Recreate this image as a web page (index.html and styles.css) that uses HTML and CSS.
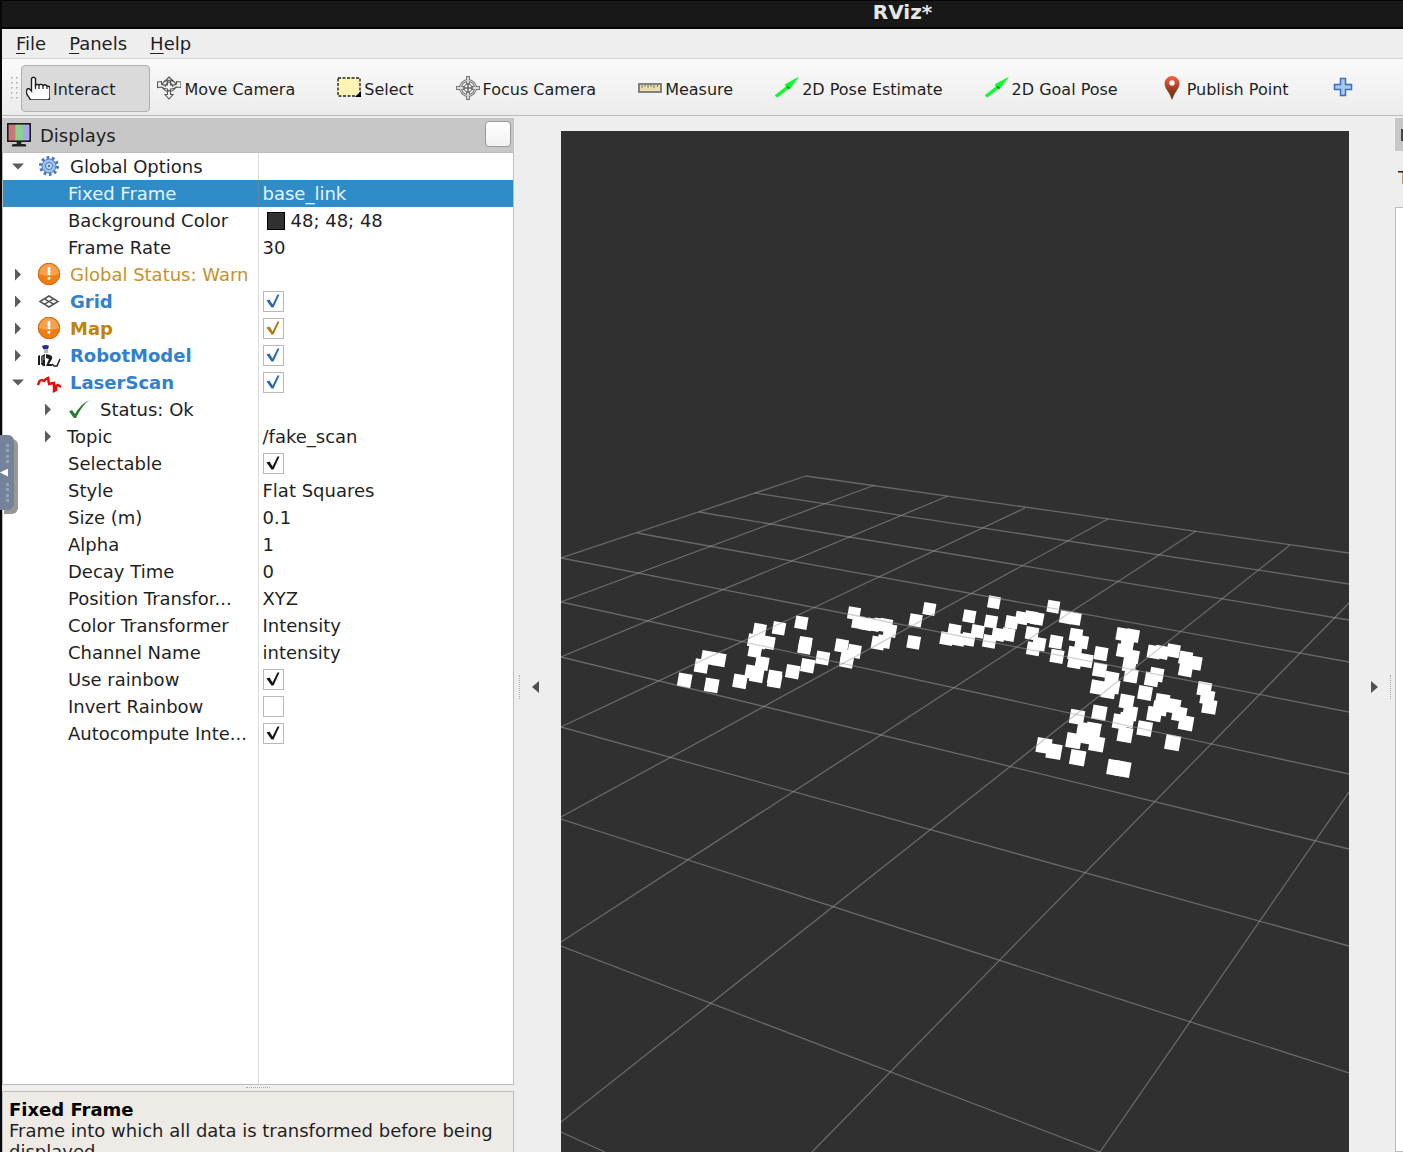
FILE: index.html
```html
<!DOCTYPE html>
<html lang="en">
<head>
<meta charset="utf-8">
<title>RViz*</title>
<link rel="stylesheet" href="styles.css">
</head>
<body>
<div class="window">
  <header class="titlebar">RViz*</header>
  <nav class="menubar">
    <button type="button"><u>F</u>ile</button>
    <button type="button"><u>P</u>anels</button>
    <button type="button"><u>H</u>elp</button>
  </nav>
  <div class="toolbar">
    <span class="grip"></span>
    <button type="button" class="tool active">
      <svg class="icon" viewBox="0 0 24 24"><path d="M5.500 13V2.500Q7.500 0 9.500 2.500V9.500L10.500 8.500Q12 8 13 9L14 8.500Q16 8 17 9.500L18.500 8.800Q20 8.500 21 10L23 10.500Q24 11 24 13V22L22.500 24H4.500L3.500 22L1 18.500Q0 16.500 0.800 14Q1.500 12 3.500 13L5.500 15Z" fill="#fff" stroke="#1c1c1c" stroke-width="1.400"/><path d="M9.500 9V13M13 9V13M17 9.500V13M21 10V13" stroke="#1c1c1c" stroke-width="1.200"/></svg>
      <span>Interact</span></button>
    <button type="button" class="tool">
      <svg class="icon" viewBox="0 0 24 24" fill="#f4f4f4" stroke="#555" stroke-width="1.100"><path d="M12 1L16 5H13.500V9Q18 9.500 19.500 8V5.500L24 6V11.500L20 11Q17 13 13.500 13V18.500H16L12 23L8 18.500H10.500V13Q7 13 4 11L0.500 11.500V6L4.500 5.500V8Q6 9.500 10.500 9V5H8Z"/><path d="M5 8.500Q9 2.500 12 4.500Q16 3 19 8.500M5 11Q9 17 12 14.500Q15 17 19 11M8 11Q10 6 12 6Q15 7 16 11" fill="none"/></svg>
      <span>Move Camera</span></button>
    <button type="button" class="tool">
      <svg class="icon" viewBox="0 0 24 24"><rect x="1" y="2" width="22" height="18" fill="#fdf4b4" stroke="#222" stroke-width="1.400" stroke-dasharray="3 1.500"/><path d="M24 15V21H18Z" fill="#000"/></svg>
      <span>Select</span></button>
    <button type="button" class="tool">
      <svg class="icon" viewBox="0 0 24 24" fill="none"><circle cx="12" cy="12" r="7.500" stroke="#777" stroke-width="2.800"/><path d="M12 0V24M0 12H24" stroke="#777" stroke-width="4"/><circle cx="12" cy="12" r="7.500" stroke="#ddd" stroke-width="1"/><path d="M12 1V8M12 16V23M1 12H8M16 12H23" stroke="#ddd" stroke-width="1.800"/><circle cx="12" cy="12" r="4" fill="#eee" stroke="#777"/><path d="M12 7V17M7 12H17" stroke="#666" stroke-width="1.400"/></svg>
      <span>Focus Camera</span></button>
    <button type="button" class="tool">
      <svg class="icon" viewBox="0 0 24 24"><rect x="1" y="8" width="22" height="8" fill="#e9dfa8" stroke="#777" stroke-width="1.800"/><path d="M4 9V12M7 9V11M10 9V12M13 9V11M16 9V12M19.500 9V11" stroke="#777"/></svg>
      <span>Measure</span></button>
    <button type="button" class="tool">
      <svg class="icon" viewBox="0 0 24 24"><path d="M1 20.500L13 11" stroke="#0bff2c" stroke-width="3.400"/><path d="M9.500 8.500L24 0.500L14.500 13.500Z" fill="#0bff2c"/><path d="M10.500 9.500L15 11L13.500 13.500Z" fill="#08901c"/></svg>
      <span>2D Pose Estimate</span></button>
    <button type="button" class="tool">
      <svg class="icon" viewBox="0 0 24 24"><path d="M1 20.500L13 11" stroke="#0bff2c" stroke-width="3.400"/><path d="M9.500 8.500L24 0.500L14.500 13.500Z" fill="#0bff2c"/><path d="M10.500 9.500L15 11L13.500 13.500Z" fill="#08901c"/></svg>
      <span>2D Goal Pose</span></button>
    <button type="button" class="tool">
      <svg class="icon" viewBox="0 0 24 24"><defs><linearGradient id="pin" x2="0" y2="1"><stop offset="0.100" stop-color="#ec5a3a"/><stop offset="0.600" stop-color="#94381d"/><stop offset="1" stop-color="#4d4a12"/></linearGradient></defs><path d="M12 24Q10 18 6 12.500Q3 7 6 3Q8.500 0 12 0T18 3Q21 7 18 12.500Q14 18 12 24Z" fill="url(#pin)"/><circle cx="12" cy="7" r="2.700" fill="#fff"/></svg>
      <span>Publish Point</span></button>
    <button type="button" class="tool" aria-label="Add tool">
      <svg class="icon" viewBox="0 0 24 24"><path d="M9.500 2.500H14.500V8.500H20.500V13.500H14.500V19.500H9.500V13.500H3.500V8.500H9.500Z" fill="#a9c8ec" stroke="#3f70b4" stroke-width="1.500"/></svg></button>
  </div>

  <main class="workspace">
    <aside class="dock">
      <div class="dock-head">
        <svg class="icon" viewBox="0 0 24 24"><rect x="1" y="1" width="22" height="17" fill="#a9a4ec"/><path d="M1 1H8.500V18H1Z" fill="#c87878"/><path d="M8.500 1H16V18H8.500Z" fill="#8ad38c"/><rect x="0.800" y="0.800" width="22.400" height="17.400" fill="none" stroke="#111" stroke-width="1.500"/><path d="M9 18H15L14 21H18Q20 22 19 23.500H5Q4 22 6 21H10Z" fill="#222"/></svg>
        <h2>Displays</h2>
        <button type="button" class="close" aria-label="Close"></button>
      </div>
      <div class="tree">
        <table>
          <colgroup><col class="name-col"><col></colgroup>
          <tbody>
          <tr><td><div class="node"><i class="arrow open"></i><svg class="icon" viewBox="0 0 24 24"><circle cx="12" cy="11" r="8.500" fill="none" stroke="#4377bd" stroke-width="3" stroke-dasharray="2.700 2.640"/><circle cx="12" cy="11" r="7" fill="#9dc0ea" stroke="#4377bd"/><circle cx="12" cy="11" r="3.500" fill="#c5daf3" stroke="#4377bd"/><circle cx="12" cy="11" r="1.200" fill="#4377bd"/></svg>Global Options</div></td><td></td></tr>
          <tr class="selected"><td><div class="leaf">Fixed Frame</div></td><td>base_link</td></tr>
          <tr><td><div class="leaf">Background Color</div></td><td><div class="color"><i class="swatch"></i>48; 48; 48</div></td></tr>
          <tr><td><div class="leaf">Frame Rate</div></td><td>30</td></tr>
          <tr class="status-warn"><td><div class="node"><i class="arrow"></i><svg class="icon" viewBox="0 0 24 24"><circle cx="12" cy="11" r="10.800" fill="#ef7d14" stroke="#cf6a12"/><path d="M2 11A10 10 0 0 1 22 11Q12 15 2 11Z" fill="#f8a04c"/><path d="M10.700 4H13.300V12H10.700ZM10.700 14H13.300V16.500H10.700Z" fill="#fff"/></svg>Global Status: Warn</div></td><td></td></tr>
          <tr class="display"><td><div class="node"><i class="arrow"></i><svg class="icon" viewBox="0 0 24 24" fill="none" stroke="#555" stroke-width="1.500"><path d="M3 11.500L12 6L21 11.500L12 17ZM7.500 8.800L16.500 14.200M16.500 8.800L7.500 14.200"/></svg><label for="grid">Grid</label></div></td><td><input type="checkbox" id="grid" checked></td></tr>
          <tr class="display warn"><td><div class="node"><i class="arrow"></i><svg class="icon" viewBox="0 0 24 24"><circle cx="12" cy="11" r="10.800" fill="#ef7d14" stroke="#cf6a12"/><path d="M2 11A10 10 0 0 1 22 11Q12 15 2 11Z" fill="#f8a04c"/><path d="M10.700 4H13.300V12H10.700ZM10.700 14H13.300V16.500H10.700Z" fill="#fff"/></svg><label for="map">Map</label></div></td><td><input type="checkbox" id="map" checked></td></tr>
          <tr class="display"><td><div class="node"><i class="arrow"></i><svg class="icon" viewBox="0 0 24 24"><path d="M5 2Q9 0 12 2L11 5H6Z" fill="#25308c"/><path d="M7 5H11V9H7Z" fill="#b8b8b8"/><path d="M1 12L3 11V21H1ZM4 12L8 10V22H6L4 20ZM9 10L13 11Q16 12 15 15L12 20H15V22H9L12 15L9 14Z" fill="#1d1d1d"/><path d="M5 12V19M7 12V16" stroke="#999"/><path d="M15 20L17 22H20L23 15" fill="none" stroke="#222" stroke-width="1.500"/></svg><label for="robot">RobotModel</label></div></td><td><input type="checkbox" id="robot" checked></td></tr>
          <tr class="display"><td><div class="node"><i class="arrow open"></i><svg class="icon" viewBox="0 0 24 24" fill="none" stroke="#f20505" stroke-width="2.400"><path d="M1 14L2.500 10L5 9L7 10L9 8L11 7L12 13L17 12V20L19 19V15L21 14L24 16"/></svg><label for="laser">LaserScan</label></div></td><td><input type="checkbox" id="laser" checked></td></tr>
          <tr><td><div class="node child"><i class="arrow"></i><svg class="icon" viewBox="0 0 24 24"><path d="M2 13.500L5 12L8 16Q13 7 22 2Q14 9 9 20H7Z" fill="#267f28"/></svg>Status: Ok</div></td><td></td></tr>
          <tr><td><div class="node child"><i class="arrow"></i>Topic</div></td><td>/fake_scan</td></tr>
          <tr><td><div class="leaf"><label for="selectable">Selectable</label></div></td><td><input type="checkbox" id="selectable" checked></td></tr>
          <tr><td><div class="leaf">Style</div></td><td>Flat Squares</td></tr>
          <tr><td><div class="leaf">Size (m)</div></td><td>0.1</td></tr>
          <tr><td><div class="leaf">Alpha</div></td><td>1</td></tr>
          <tr><td><div class="leaf">Decay Time</div></td><td>0</td></tr>
          <tr><td><div class="leaf">Position Transfor...</div></td><td>XYZ</td></tr>
          <tr><td><div class="leaf">Color Transformer</div></td><td>Intensity</td></tr>
          <tr><td><div class="leaf">Channel Name</div></td><td>intensity</td></tr>
          <tr><td><div class="leaf"><label for="rainbow">Use rainbow</label></div></td><td><input type="checkbox" id="rainbow" checked></td></tr>
          <tr><td><div class="leaf"><label for="invert">Invert Rainbow</label></div></td><td><input type="checkbox" id="invert"></td></tr>
          <tr><td><div class="leaf"><label for="auto">Autocompute Inte...</label></div></td><td><input type="checkbox" id="auto" checked></td></tr>
          <tr class="filler"><td></td><td></td></tr>
          </tbody>
        </table>
      </div>
      <div class="split-row"><span></span></div>
      <section class="help"><h3>Fixed Frame</h3><p>Frame into which all data is transformed before being displayed.</p></section>
    </aside>

    <div class="splitter"><span class="dots"></span><i class="collapse left"></i></div>

    <div class="view">
      <svg class="scene" viewBox="561 131 788 1021" preserveAspectRatio="xMidYMax slice" role="img" aria-label="Laser scan over grid">
        <g id="points" fill="#fff"></g>
        <g id="grid-lines" stroke="#a0a0a4" stroke-opacity="0.500" stroke-width="1.300">
          <path d="M806 476L1349 553M755 493L1349 584M699 512L1349 620M637 533L1349 662M561 558L1349 712M561 602L1349 774M561 657L1349 849M561 727L1349 946M561 819L1349 1073M561 946L1100 1152M561 1132L605 1152"/>
          <path d="M806 476L561 558M875 485L561 602M948 496L561 657M1025 508L561 727M1108 519L561 817M1196 531L561 942M1290 545L561 1122M1349 603L812 1152M1349 792L1100 1152"/>
        </g>
      </svg>
    </div>

    <div class="splitter right"><i class="collapse"></i><span class="dots"></span></div>

    <aside class="views">
      <div class="views-head"><i></i></div>
      <p>Type:</p>
      <div class="views-list"></div>
    </aside>
  </main>
  <button type="button" class="drawer" aria-label="Open side bar"><span></span><i></i><span></span></button>
</div>
<script src="scene.js"></script>
</body>
</html>
```
FILE: styles.css
```css
* { box-sizing: border-box; }
body {
  margin: 0;
  font: 18px/21px "DejaVu Sans", sans-serif;
  color: #1f1f1f;
  background: #eee;
}
button {
  font: inherit;
  color: inherit;
  background: none;
  border: 0;
  padding: 0;
}
h2, h3, p { margin: 0; font-size: inherit; }
h2 { font-weight: normal; }
.window {
  position: relative;
  height: 100vh;
  overflow: hidden;
  display: flex;
  flex-direction: column;
  padding-left: 2px;
  background: linear-gradient(to right, #080808 2px, #eee 2px);
}
.icon { width: 24px; height: 24px; flex: none; }

.titlebar {
  height: 29px;
  flex: none;
  padding-top: 1px;
  background: #181818;
  border-top: 1px solid #050505;
  border-bottom: 2px solid #050505;
  color: #e6e6e6;
  font-size: 20px;
  font-weight: bold;
  text-align: center;
  padding-left: 400px;
}
.menubar {
  height: 30px;
  flex: none;
  display: flex;
  align-items: center;
  gap: 23px;
  padding-left: 14px;
  border-bottom: 1px solid #d4d4d4;
}
.menubar u { text-underline-offset: 3px; text-decoration-thickness: 1px; }
.toolbar {
  height: 57px;
  flex: none;
  display: flex;
  align-items: center;
  gap: 2px;
  padding: 2px 0 0 7px;
  background: linear-gradient(#fafafa, #ececec);
  border-bottom: 1px solid #b9b9b9;
  font-size: 16px;
}
.grip {
  width: 10px;
  height: 26px;
  background: radial-gradient(circle, #bbb 1px, transparent 1px) 0 0 / 5px 5px;
}
.tool {
  height: 47px;
  flex: none;
  display: flex;
  align-items: center;
  gap: 3px;
  padding: 0 34px 0 4px;
  border: 1px solid transparent;
  border-radius: 4px;
  white-space: nowrap;
}
.tool span { padding-top: 2px; }
.tool.active {
  background: #dadada;
  border-color: #b0b0b0;
}

.workspace {
  flex: 1;
  min-height: 0;
  display: flex;
}
.dock {
  width: 512px;
  flex: none;
  display: flex;
  flex-direction: column;
  padding-top: 2px;
}
.dock-head {
  height: 34px;
  flex: none;
  display: flex;
  align-items: center;
  gap: 9px;
  padding: 0 3px 0 5px;
  background: #c7c7c7;
}
.close {
  width: 26px;
  height: 26px;
  margin-left: auto;
  margin-bottom: 2px;
  background: linear-gradient(#fff, #f1f1f1);
  border: 1px solid #999;
  border-radius: 4px;
}
.tree {
  flex: 1;
  min-height: 0;
  background: #fff;
  border: 1px solid #bdbdbd;
}
table {
  width: 100%;
  height: 100%;
  border-collapse: collapse;
  table-layout: fixed;
}
.name-col { width: 255px; }
tr { height: 27px; }
.filler { height: auto; }
td { padding: 0; vertical-align: middle; white-space: nowrap; }
td + td { padding-left: 4px; border-left: 1px solid #dcdcdc; }
.node {
  height: 27px;
  display: flex;
  align-items: center;
  gap: 9px;
  padding-left: 5px;
}
.child { padding-left: 35px; }
.leaf { padding-left: 65px; }
.arrow {
  width: 20px;
  height: 12px;
  flex: none;
  background: #5c5c5c;
  clip-path: polygon(7px 0, 13px 6px, 7px 12px);
}
.arrow.open { clip-path: polygon(4px 3px, 16px 3px, 10px 9px); }
.selected td { background: #308cc6; color: #e9f3fa; }
.selected td + td { border-color: #5c87a5; }
.status-warn { color: #c8902a; }
input[type="checkbox"] {
  appearance: none;
  display: block;
  width: 21px;
  height: 21px;
  margin: 0 0 1px;
  background: #fff;
  border: 1px solid #b8b8b8;
  color: #151515;
}
input:checked::before {
  content: "";
  display: block;
  width: 19px;
  height: 19px;
  background: currentColor;
  clip-path: polygon(3px 9px, 6px 8px, 9px 13px, 14px 3px, 16px 3px, 10px 16px, 8px 16px);
}
.display label { color: #3080d0; font-weight: bold; }
.display input[type="checkbox"] { color: #2b68b0; }
.warn label { color: #c08208; }
.warn input[type="checkbox"] { color: #b07a10; }
.color { display: flex; align-items: center; gap: 6px; padding-left: 4px; }
.swatch { width: 18px; height: 18px; background: #303030; border: 1px solid #000; }
.split-row {
  height: 6px;
  flex: none;
  display: flex;
  justify-content: center;
  align-items: flex-start;
  padding-top: 2px;
}
.split-row span { width: 24px; border-top: 1px dotted #aaa; }
.help {
  height: 61px;
  flex: none;
  padding: 7px 6px;
  background: #eeebe6;
  border: 1px solid #bdbdbd;
  border-bottom: 0;
}
.help h3 { color: #000; }

.splitter {
  width: 47px;
  flex: none;
  display: flex;
  align-items: center;
  padding: 106px 0 0 5px;
  gap: 12px;
}
.splitter.right { width: 46px; padding-left: 22px; gap: 12px; }
.dots { height: 24px; border-left: 1px dotted #aaa; }
.collapse {
  width: 7px;
  height: 12px;
  background: #505050;
  clip-path: polygon(0 0, 100% 50%, 0 100%);
}
.collapse.left { clip-path: polygon(100% 0, 0 50%, 100% 100%); }
.view {
  flex: 1;
  min-width: 0;
  margin-top: 15px;
  background: #303030;
}
.scene { display: block; width: 100%; height: 100%; }
.views {
  width: 8px;
  flex: none;
  overflow: hidden;
  display: flex;
  flex-direction: column;
  padding-top: 2px;
}
.views-head {
  height: 33px;
  flex: none;
  display: flex;
  align-items: center;
  padding-left: 6px;
  background: #c7c7c7;
}
.views-head i { width: 20px; height: 12px; background: #444; flex: none; }
.views p { padding: 16px 0 19px 3px; }
.views-list { flex: 1; background: #fff; border: 1px solid #bdbdbd; border-right: 0; }

/* Drawer handle floats over the left window edge. */
.drawer {
  position: absolute;
  left: 0;
  top: 435px;
  width: 14px;
  height: 75px;
  display: flex;
  flex-direction: column;
  align-items: center;
  justify-content: center;
  gap: 6px;
  background: #75839a;
  border-radius: 0 6px 6px 0;
  box-shadow: 4px 4px 0 #989898;
}
.drawer span { height: 19px; border-left: 3px dotted #98a4b6; }
.drawer i {
  width: 8px;
  height: 8px;
  align-self: flex-start;
  background: #fff;
  clip-path: polygon(100% 0, 0 50%, 100% 100%);
}
```
FILE: scene.js
```js
// Laser returns as [x, y] pairs in thirds of a scene unit, each batch with its own origin.
const batches = [
  { x: 660, y: 590, hits: [[74,271],[155,286],[124,228],[144,203],[177,209],[240,274],[299,120],[357,115],[424,98],[283,152],[325,158],[285,182],[299,156],[306,220],[276,246],[290,256],[344,262],[344,272],[434,172],[436,160],[398,245],[443,227],[488,204],[545,167],[560,213],[583,184],[562,200],[582,70],[595,97],[618,102],[640,104],[660,104],[678,105],[690,122],[672,155],[654,159],[767,91],[808,57],[761,157]] },
  { x: 930, y: 590, hits: [[192,37],[370,50],[118,79],[183,95],[73,122],[50,146],[85,148],[115,148],[143,124],[178,154],[205,134],[235,134],[245,97],[275,84],[303,82],[322,86],[306,130],[327,162],[310,176],[378,156],[381,199],[408,82],[434,86],[438,135],[455,156],[434,190],[434,215],[468,212],[513,191],[509,240],[545,266],[503,292],[535,304],[548,290],[578,133],[608,137],[592,160],[580,182],[607,200],[598,225],[603,257],[672,186],[695,187],[730,182],[767,204],[795,219],[767,239],[680,254],[665,268],[645,309],[823,297],[832,322],[838,350],[590,335],[600,370],[570,395],[585,434],[644,416],[697,333],[673,372],[730,348],[748,372],[768,399],[690,355],[728,458],[590,390],[508,368],[441,381],[463,420],[490,420],[431,452],[475,440],[500,462],[342,467],[372,484],[443,503],[555,533],[578,537]] }
];
const layer = document.getElementById("points");
for (const batch of batches) {
  for (const [u, v] of batch.hits) {
    const x = batch.x + u / 3;
    const y = batch.y + v / 3;
    const size = 12 + (y - 600) * 0.02;
    const square = document.createElementNS("http://www.w3.org/2000/svg", "rect");
    square.setAttribute("x", x - size / 2);
    square.setAttribute("y", y - size / 2);
    square.setAttribute("width", size);
    square.setAttribute("height", size);
    square.setAttribute("transform", `rotate(10 ${x} ${y})`);
    layer.append(square);
  }
}
```
